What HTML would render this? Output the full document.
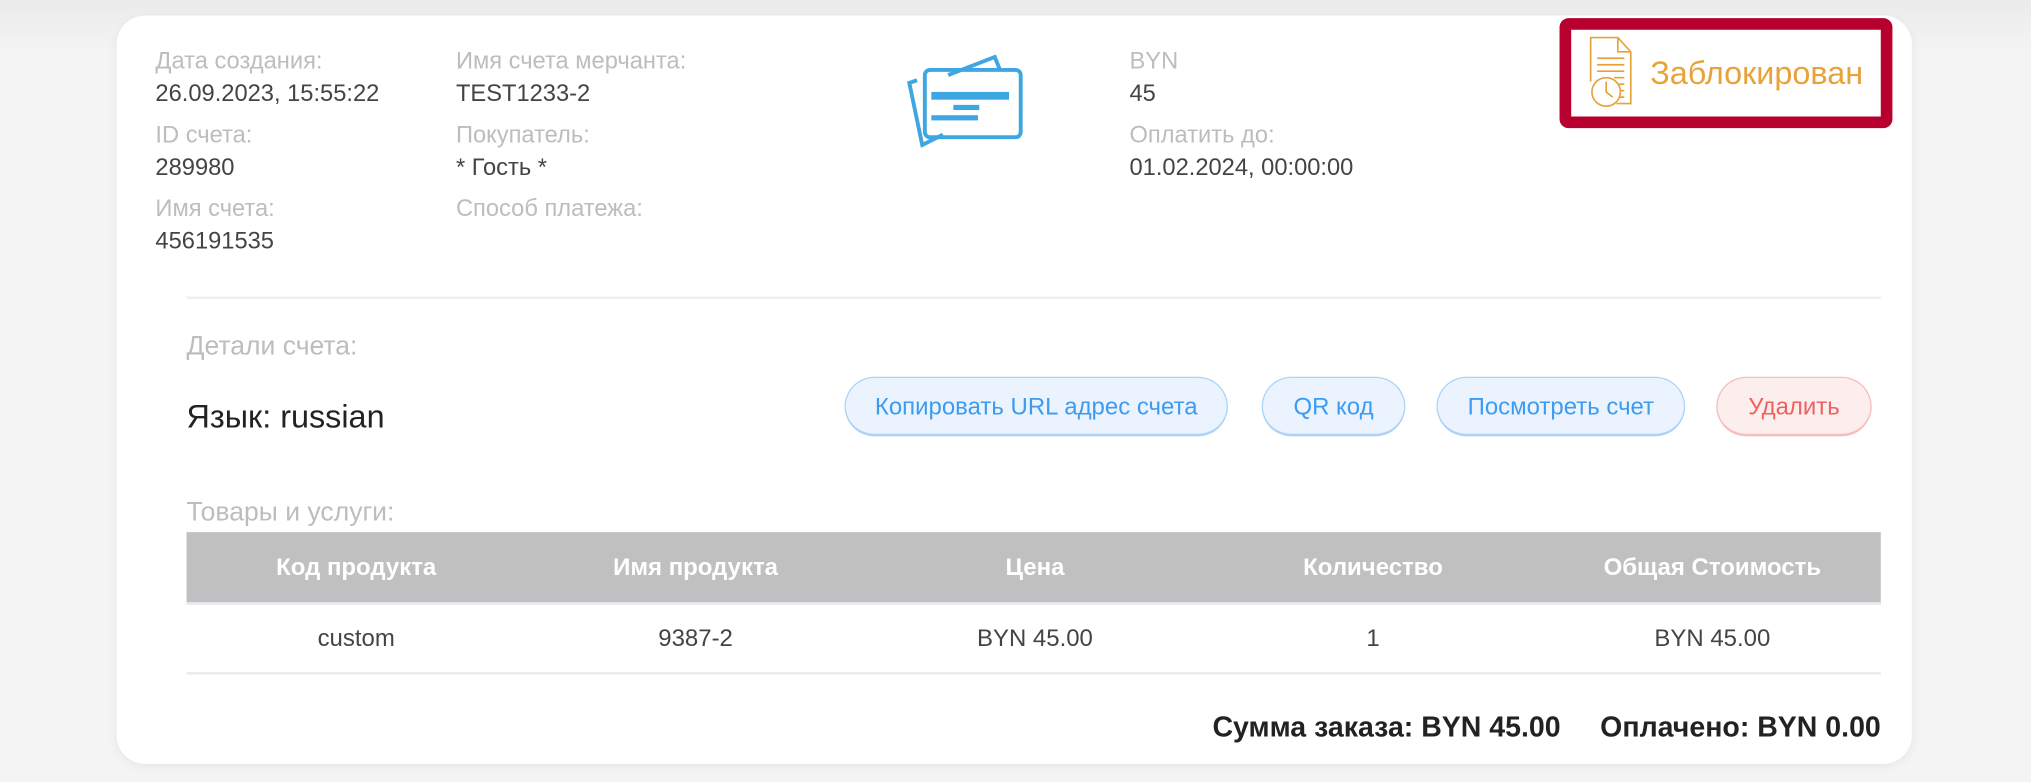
<!DOCTYPE html>
<html><head><meta charset="utf-8"><style>
html,body{margin:0;padding:0;width:2031px;height:782px;overflow:hidden;background:#f4f4f4;}
#w{position:absolute;left:0;top:0;width:1568px;height:604px;transform:scale(1.2953,1.2947);transform-origin:0 0;font-family:"Liberation Sans",sans-serif;background:linear-gradient(#ebebeb 0,#f4f4f4 40px);}
.card{position:absolute;left:90px;top:12px;width:1386px;height:578px;background:#fff;border-radius:22px;box-shadow:0 2px 8px rgba(0,0,0,.06);}
.t{position:absolute;white-space:nowrap;line-height:1;}
.l{color:#bdbdbd;font-size:18.3px;}
.v{color:#444;font-size:18.3px;}
.btn{position:absolute;top:291px;height:46px;border-radius:24px;border:1px solid #acd3f8;border-bottom-width:2px;background:#eaf3fe;color:#3d9bf0;font-size:18.5px;display:flex;align-items:center;justify-content:center;box-sizing:border-box;white-space:nowrap;}
.th{position:absolute;top:411px;height:54px;width:262px;color:#fff;font-weight:bold;font-size:18.5px;display:flex;align-items:center;justify-content:center;}
.td{position:absolute;top:465px;height:55px;width:262px;color:#444;font-size:18.5px;display:flex;align-items:center;justify-content:center;}
</style></head><body><div id="w">
<div class="card"></div>
<div class="t l" style="left:120px;top:38px">Дата создания:</div>
<div class="t v" style="left:120px;top:63px">26.09.2023, 15:55:22</div>
<div class="t l" style="left:120px;top:95px">ID счета:</div>
<div class="t v" style="left:120px;top:120px">289980</div>
<div class="t l" style="left:120px;top:152px">Имя счета:</div>
<div class="t v" style="left:120px;top:177px">456191535</div>
<div class="t l" style="left:352px;top:38px">Имя счета мерчанта:</div>
<div class="t v" style="left:352px;top:63px">TEST1233-2</div>
<div class="t l" style="left:352px;top:95px">Покупатель:</div>
<div class="t v" style="left:352px;top:120px">* Гость *</div>
<div class="t l" style="left:352px;top:152px">Способ платежа:</div>
<div class="t l" style="left:872px;top:38px">BYN</div>
<div class="t v" style="left:872px;top:63px">45</div>
<div class="t l" style="left:872px;top:95px">Оплатить до:</div>
<div class="t v" style="left:872px;top:120px">01.02.2024, 00:00:00</div>
<svg style="position:absolute;left:698px;top:40px" width="92" height="76" viewBox="0 0 92 76" fill="none" stroke="#3ea6e0" stroke-width="3">
<path d="M10 22 L4 24 L14 72 L30 64"/>
<path d="M34 18 L70 4 L74 14"/>
<rect x="16" y="14" width="74" height="52" rx="4"/>
<rect x="21" y="31" width="60" height="6" fill="#3ea6e0" stroke="none"/>
<rect x="38" y="41" width="20" height="4" fill="#3ea6e0" stroke="none"/>
<rect x="21" y="49" width="36" height="4" fill="#3ea6e0" stroke="none"/>
</svg>
<div style="position:absolute;left:1204px;top:14px;width:257px;height:85px;box-sizing:border-box;border:9px solid #b8002f;border-radius:7px;background:#fff"></div>
<svg style="position:absolute;left:1224px;top:27px" width="44" height="60" viewBox="0 0 44 60" fill="none" stroke="#e8a23a" stroke-width="1.3">
<path d="M4 36 V2 H25 L35 13 V53 H24"/>
<path d="M25 2 V13 H35"/>
<path d="M9 18 H30 M9 23 H30 M9 28 H30 M22 33 H30 M23 38 H30 M23 43 H30 M23 48 H30"/>
<circle cx="16" cy="44" r="11" fill="#fff"/>
<path d="M16 36 V44 L21 48"/>
</svg>
<div class="t" style="left:1274px;top:45px;font-size:25px;color:#e8a23a">Заблокирован</div>
<div style="position:absolute;left:144px;top:229px;width:1308px;height:2px;background:#efefef"></div>
<div class="t" style="left:144px;top:258px;font-size:20.5px;color:#bdbdbd">Детали счета:</div>
<div class="t" style="left:144px;top:310px;font-size:25px;color:#222">Язык: russian</div>
<div class="btn" style="left:652px;width:296px">Копировать URL адрес счета</div>
<div class="btn" style="left:974px;width:111px">QR код</div>
<div class="btn" style="left:1109px;width:192px">Посмотреть счет</div>
<div class="btn" style="left:1325px;width:120px;background:#fdeeee;border-color:#f7bcbc;color:#f06060">Удалить</div>
<div class="t" style="left:144px;top:386px;font-size:20.5px;color:#bdbdbd">Товары и услуги:</div>
<div style="position:absolute;left:144px;top:411px;width:1308px;height:54px;background:#c0c0c0;border-bottom:2px solid #e6e9ef"></div>
<div class="th" style="left:144px">Код продукта</div>
<div class="th" style="left:406px">Имя продукта</div>
<div class="th" style="left:668px">Цена</div>
<div class="th" style="left:929px">Количество</div>
<div class="th" style="left:1191px">Общая Стоимость</div>
<div class="td" style="left:144px">custom</div>
<div class="td" style="left:406px">9387-2</div>
<div class="td" style="left:668px">BYN 45.00</div>
<div class="td" style="left:929px">1</div>
<div class="td" style="left:1191px">BYN 45.00</div>
<div style="position:absolute;left:144px;top:519px;width:1308px;height:2px;background:#e8ecf0"></div>
<div class="t" style="right:116px;top:551px;font-size:22px;font-weight:bold;color:#222">Сумма заказа: BYN 45.00&nbsp;&nbsp;&nbsp;&nbsp;&nbsp;Оплачено: BYN 0.00</div>
</div></body></html>
